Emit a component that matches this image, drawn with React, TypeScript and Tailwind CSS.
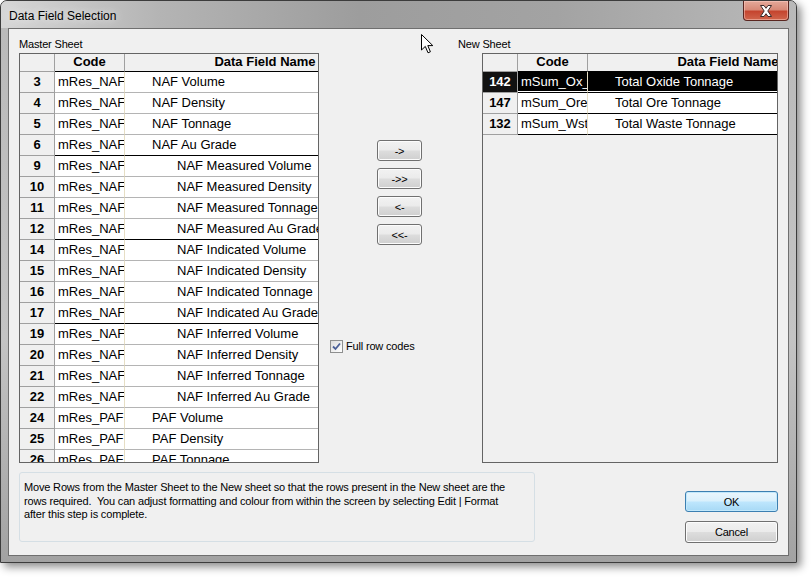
import React from "react";

type Row = { n: number; code: string; name: string; indent: 1 | 2; groupEnd?: boolean };

const leftRows: Row[] = [
  { n: 3, code: "mRes_NAF", name: "NAF Volume", indent: 1 },
  { n: 4, code: "mRes_NAF", name: "NAF Density", indent: 1 },
  { n: 5, code: "mRes_NAF", name: "NAF Tonnage", indent: 1 },
  { n: 6, code: "mRes_NAF", name: "NAF Au Grade", indent: 1, groupEnd: true },
  { n: 9, code: "mRes_NAF", name: "NAF Measured Volume", indent: 2 },
  { n: 10, code: "mRes_NAF", name: "NAF Measured Density", indent: 2 },
  { n: 11, code: "mRes_NAF", name: "NAF Measured Tonnage", indent: 2 },
  { n: 12, code: "mRes_NAF", name: "NAF Measured Au Grade", indent: 2, groupEnd: true },
  { n: 14, code: "mRes_NAF", name: "NAF Indicated Volume", indent: 2 },
  { n: 15, code: "mRes_NAF", name: "NAF Indicated Density", indent: 2 },
  { n: 16, code: "mRes_NAF", name: "NAF Indicated Tonnage", indent: 2 },
  { n: 17, code: "mRes_NAF", name: "NAF Indicated Au Grade", indent: 2, groupEnd: true },
  { n: 19, code: "mRes_NAF", name: "NAF Inferred Volume", indent: 2 },
  { n: 20, code: "mRes_NAF", name: "NAF Inferred Density", indent: 2 },
  { n: 21, code: "mRes_NAF", name: "NAF Inferred Tonnage", indent: 2 },
  { n: 22, code: "mRes_NAF", name: "NAF Inferred Au Grade", indent: 2 },
  { n: 24, code: "mRes_PAF", name: "PAF Volume", indent: 1 },
  { n: 25, code: "mRes_PAF", name: "PAF Density", indent: 1 },
  { n: 26, code: "mRes_PAF", name: "PAF Tonnage", indent: 1 },
];

const rightRows: Row[] = [
  { n: 142, code: "mSum_Ox_Ton", name: "Total Oxide Tonnage", indent: 1, groupEnd: true },
  { n: 147, code: "mSum_Ore_Ton", name: "Total Ore Tonnage", indent: 1, groupEnd: true },
  { n: 132, code: "mSum_Wst_Ton", name: "Total Waste Tonnage", indent: 1, groupEnd: true },
];

function GridHeader() {
  return (
    <div className="flex h-[18px] shrink-0">
      <div className="w-[35px] shrink-0 border-r border-b border-[#a0a0a0] bg-[#f0f0f0]" />
      <div className="w-[70px] shrink-0 border-r border-r-[#a0a0a0] border-b border-b-black bg-[#f0f0f0] text-center font-bold leading-[16px]">
        Code
      </div>
      <div className="w-[280px] shrink-0 border-b border-b-black bg-[#f0f0f0] text-center font-bold leading-[16px]">
        Data Field Name
      </div>
    </div>
  );
}

function GridRow({ row, selected }: { row: Row; selected?: boolean }) {
  const line = row.groupEnd ? "border-b-black" : "border-b-[#b4b4b4]";
  const cell = selected ? "bg-black text-white shadow-[inset_0_-1px_0_#ffffff]" : "bg-white";
  return (
    <div className="flex h-[21px] shrink-0">
      <div
        className={`w-[35px] shrink-0 border-r border-b border-[#a0a0a0] flex items-center justify-center font-bold ${
          selected ? "bg-[#111] text-white" : "bg-[#f0f0f0]"
        }`}
      >
        {row.n}
      </div>
      <div
        className={`w-[70px] shrink-0 border-r border-r-[#e6dec4] border-b ${line} ${cell} pl-[3px] flex items-center overflow-hidden whitespace-nowrap`}
      >
        {row.code}
      </div>
      <div
        className={`w-[280px] shrink-0 border-b ${line} ${cell} ${
          row.indent === 2 ? "pl-[52px]" : "pl-[27px]"
        } flex items-center whitespace-nowrap`}
      >
        {row.name}
      </div>
    </div>
  );
}

function Grid({ rows, selectedIndex }: { rows: Row[]; selectedIndex?: number }) {
  return (
    <div className="w-full h-[410px] border border-[#646464] bg-[#f0f0f0] overflow-hidden flex flex-col text-[13px] tracking-normal text-black">
      <GridHeader />
      {rows.map((r, i) => (
        <GridRow key={r.n} row={r} selected={i === selectedIndex} />
      ))}
    </div>
  );
}

function SmallButton({ children }: { children: React.ReactNode }) {
  return (
    <button className="w-[45px] h-[21px] rounded-[3px] border border-[#707070] bg-[linear-gradient(180deg,#f2f2f2_0%,#ebebeb_48%,#dddddd_52%,#cfcfcf_100%)] shadow-[inset_0_0_0_1px_#fcfcfc] text-[11px] leading-[18px] text-black">
      {children}
    </button>
  );
}

function Checkbox() {
  return (
    <div className="w-[13px] h-[13px] border border-[#8e8f8f] bg-[linear-gradient(135deg,#dcdcdc_0%,#ffffff_100%)] flex items-center justify-center">
      <svg width="9" height="9" viewBox="0 0 9 9">
        <path d="M1 4.5 L3.5 7 L8 1.5" fill="none" stroke="#4a5f97" strokeWidth="1.8" />
      </svg>
    </div>
  );
}

function CloseButton() {
  return (
    <div className="w-[46px] h-[20px] rounded-b-[4px] border border-t-0 border-[#5a2620] bg-[linear-gradient(180deg,#e4a99a_0%,#d88a78_45%,#c5452f_55%,#d0654c_100%)] shadow-[inset_0_0_0_1px_rgba(255,210,200,0.5)] flex items-center justify-center">
      <svg width="14" height="12" viewBox="0 0 14 12">
        <path
          d="M1.5 0.5 H5 L7 3.3 L9 0.5 H12.5 L8.8 6 L12.5 11.5 H9 L7 8.7 L5 11.5 H1.5 L5.2 6 Z"
          fill="#ffffff"
          stroke="#3a2a2a"
          strokeWidth="1"
        />
      </svg>
    </div>
  );
}

export default function App() {
  return (
    <div className="relative w-[811px] h-[578px] bg-white overflow-hidden font-['Liberation_Sans',Arial,sans-serif]">
      <div className="w-[797px] h-[563px] rounded-t-[7px] border border-[#3c3c3c] bg-[linear-gradient(180deg,#b9b9b9_0%,#c4c4c4_60%,#a2a2a2_100%)] shadow-[4px_4px_8px_rgba(0,0,0,0.45)] flex flex-col">
        {/* Title bar */}
        <div className="h-[27px] shrink-0 rounded-t-[6px] bg-[linear-gradient(90deg,#d6d6d6_0%,#b4b4b4_20%,#9d9d9d_45%,#a3a3a3_70%,#b9b9b9_100%)] flex items-start justify-between pl-[8px] pr-[7px]">
          <span className="mt-[6px] text-[12px] text-black [text-shadow:0_0_8px_rgba(255,255,255,0.95)]">
            Data Field Selection
          </span>
          <CloseButton />
        </div>

        {/* Client area */}
        <div className="mx-[7px] h-[528px] border border-[#6f6f6f] bg-[#f0f0f0] flex flex-col text-[11px] tracking-[-0.17px] text-black">
          <div className="flex pl-[10px]">
            {/* Master sheet */}
            <div className="w-[300px] shrink-0 flex flex-col">
              <div className="h-[24px] pt-[8px] leading-[14px]">Master Sheet</div>
              <Grid rows={leftRows} />
            </div>

            {/* Move buttons */}
            <div className="w-[139px] shrink-0 flex flex-col">
              <div className="ml-[58px] mt-[111px] flex flex-col gap-[7px]">
                <SmallButton>-&gt;</SmallButton>
                <SmallButton>-&gt;&gt;</SmallButton>
                <SmallButton>&lt;-</SmallButton>
                <SmallButton>&lt;&lt;-</SmallButton>
              </div>
              <div className="ml-[11px] mt-[94px] flex items-center gap-[3px]">
                <Checkbox />
                <span className="leading-[13px] mt-[1px]">Full row codes</span>
              </div>
            </div>

            {/* New sheet */}
            <div className="flex flex-col">
              <div className="h-[24px] pt-[8px] leading-[14px]">New Sheet</div>
              <div className="ml-[24px] w-[296px]">
                <Grid rows={rightRows} selectedIndex={0} />
              </div>
            </div>
          </div>

          {/* Bottom */}
          <div className="flex pl-[10px] pr-[10px] mt-[9px]">
            <div className="w-[516px] h-[70px] rounded-[3px] border border-[#d5dfe5] pl-[4px] pt-[8px] leading-[13.5px] whitespace-pre">
              <div>Move Rows from the Master Sheet to the New sheet so that the rows present in the New sheet are the</div>
              <div>rows required.  You can adjust formatting and colour from within the screen by selecting Edit | Format</div>
              <div>after this step is complete.</div>
            </div>
            <div className="ml-auto w-[93px] pt-[19px] flex flex-col gap-[9px]">
              <button className="h-[21px] rounded-[3px] border border-[#3c7fb1] bg-[linear-gradient(180deg,#eaf6fd_0%,#d9f0fc_48%,#bee6fd_52%,#a7d9f5_100%)] shadow-[inset_0_0_0_1px_#c2e8fb] text-[11px] leading-[18px]">
                OK
              </button>
              <button className="h-[22px] rounded-[3px] border border-[#707070] bg-[linear-gradient(180deg,#f2f2f2_0%,#ebebeb_48%,#dddddd_52%,#cfcfcf_100%)] shadow-[inset_0_0_0_1px_#fcfcfc] text-[11px] leading-[19px]">
                Cancel
              </button>
            </div>
          </div>
        </div>
      </div>

      {/* Mouse pointer */}
      <svg className="absolute left-[421px] top-[34px]" width="13" height="20" viewBox="0 0 13 20">
        <path
          d="M0.5 0.5 L0.5 16 L4.3 12.4 L7 18.8 L9.4 17.8 L6.8 11.6 L11.8 11.6 Z"
          fill="#ffffff"
          stroke="#000000"
          strokeWidth="1"
          strokeLinejoin="round"
        />
      </svg>
    </div>
  );
}
